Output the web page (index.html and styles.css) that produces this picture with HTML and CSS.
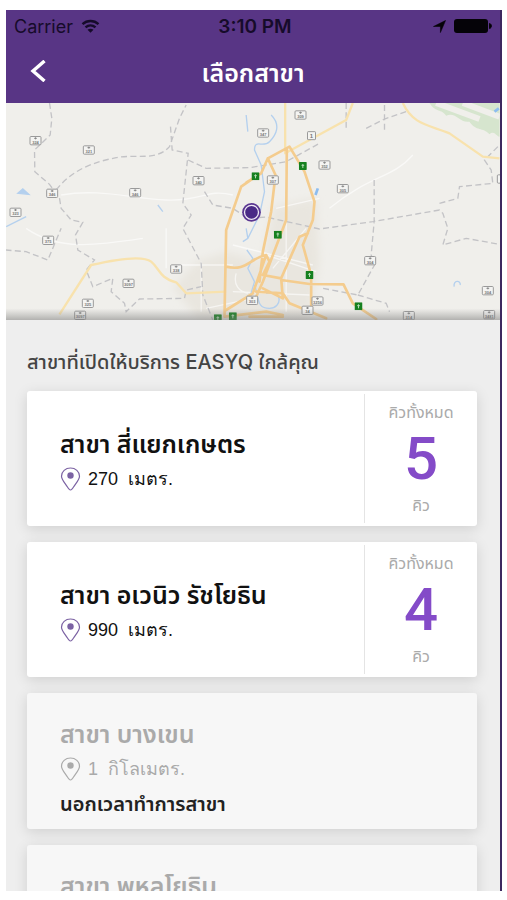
FILE: index.html
```html
<!DOCTYPE html>
<html lang="th">
<head>
<meta charset="utf-8">
<meta name="viewport" content="width=device-width, initial-scale=1">
<title>เลือกสาขา</title>
<link rel="stylesheet" href="styles.css">
</head>
<body>
<svg class="defs" aria-hidden="true">
  <symbol id="pin" viewBox="0 0 20 24">
    <path d="M10 23C9 23 7.800 21.500 6.500 19.300C4.500 16.200 1 12.500 1 9.200C1 4.500 5 1 10 1s9 3.500 9 8.200c0 3.300-3.500 7-5.500 10.100C12.200 21.500 11 23 10 23z" fill="none" stroke="currentColor" stroke-width="1.200"/>
    <circle cx="10" cy="8.500" r="3.200" fill="currentColor"/>
  </symbol>
  <symbol id="shield" viewBox="0 0 36 28" overflow="visible">
    <rect x="1.500" y="1.500" width="33" height="25" rx="3" fill="#f4f4f2" stroke="#9a9a9a" stroke-width="3"/>
    <path d="M14 7h8M18 4v6" stroke="#888" stroke-width="3"/>
  </symbol>
  <symbol id="motorway" viewBox="0 0 24 24">
    <rect width="24" height="24" rx="2" fill="#16801f"/>
    <path d="M12 6v12M8 10h8" stroke="#b5dbb5" stroke-width="3"/>
  </symbol>
</svg>
<div class="app">
  <header class="top">
    <div class="status">
      <div class="carrier"><span>Carrier</span>
        <svg class="wifi" viewBox="0 0 18 14" aria-hidden="true"><g fill="none" stroke="currentColor" stroke-width="2.400"><path d="M1 5.200c4.600-4.200 11.400-4.200 16 0"/><path d="M4 8.300c3-2.600 7-2.600 10 0"/></g><path d="M6 10.800c1.800-1.500 4.200-1.500 6 0L9 13.800z" fill="currentColor"/></svg>
      </div>
      <div class="time">3:10 PM</div>
      <div class="power">
        <svg class="arrow" viewBox="0 0 14 14" aria-hidden="true"><path d="M13.500.5L8 13.500V7H.5z" fill="currentColor" stroke="currentColor" stroke-width=".6"/></svg>
        <svg class="battery" viewBox="0 0 38 14" aria-hidden="true"><rect width="34" height="14" rx="3" fill="currentColor"/><path d="M35.500 4.500c2.500.5 2.500 4.500 0 5z" fill="currentColor" stroke="currentColor"/></svg>
      </div>
    </div>
    <div class="nav">
      <button class="back" aria-label="กลับ"><svg viewBox="0 0 16 22" aria-hidden="true"><path d="M14.500 1L3 11l11.500 10" fill="none" stroke="currentColor" stroke-width="3.400"/></svg></button>
      <h1>เลือกสาขา</h1>
    </div>
  </header>

  <div class="map">
    <svg viewBox="18 24 1485 651" preserveAspectRatio="xMidYMid slice" role="img" aria-label="แผนที่สาขา">
      <defs>
        <linearGradient id="fade" x1="0" y1="0" x2="0" y2="1"><stop offset="0" stop-color="#888" stop-opacity="0"/><stop offset="1" stop-color="#777" stop-opacity=".6"/></linearGradient>
        <filter id="soften"><feGaussianBlur stdDeviation="12"/></filter>
      </defs>
      <rect x="0" y="0" width="1530" height="700" fill="#f0efeb"/>
      <path d="M820 335L950 310L960 500L930 675H600L520 580L590 500L680 470L790 500z" fill="#e9e6df" filter="url(#soften)"/>
      <path d="M1290 24C1310 55 1325 40 1340 62C1370 50 1380 85 1410 80C1430 110 1450 95 1470 118C1485 105 1490 125 1500 125V24z" fill="#d6e5ce"/>
      <path d="M1310 24L1440 72M1390 24L1500 65" stroke="#f0efeb" stroke-width="18"/>
      <g fill="none" stroke="#fff" stroke-width="4" opacity=".6">
        <path d="M185 300C300 280 390 310 500 315S620 280 700 300M80 400C180 470 300 450 430 430M500 400V520M530 510H700M605 500V650M700 450L940 510M830 340L960 310M800 480L950 530M700 590L930 600M820 520L920 400M860 230V650M990 340C1110 240 1180 250 1240 180M620 640L760 610M710 535C700 570 720 590 745 595"/>
      </g>
      <g fill="none" stroke="#c3c3c6" stroke-width="4" stroke-dasharray="18 10">
        <path d="M150 24L157 70L152 120L105 165L106 230L150 268L180 310L185 340L215 375L250 382L228 420L235 465L285 495L260 525L280 575L340 550L335 590L375 625L380 650L420 612L555 610L560 585L605 575M170 285C220 220 290 200 350 188S470 200 510 155L540 70L560 30M513 95L518 165L566 175L550 325L575 360L550 400L605 505L610 600L640 675M566 195L620 220L750 218L860 200L960 145M615 290L640 330L700 340L745 370L800 366L960 402L1120 380L1320 345L1330 355L1345 400L1330 450L1400 430L1500 448M18 465L80 470L145 495L185 400M1124 255V380L1115 480L1125 510L1075 600L970 580M1075 600L1160 625L1170 650M1320 325L1375 310L1380 275L1480 265L1475 225L1455 195L1500 150M1040 24V105M1100 100L1155 72L1220 50M1155 30V105"/>
      </g>
      <g fill="none" stroke="#b4d0ee" stroke-width="4">
        <path d="M740 60L745 110M815 60C845 90 830 120 810 140S765 130 765 165L785 210M740 400L745 430L730 440M742 465L760 490L745 520L765 560L750 610M785 210L795 290L780 360L745 430M800 595C850 580 850 640 810 640S780 610 765 570M20 395L80 365M475 330L490 350"/>
        <path d="M55 295L70 282L88 298z" fill="#b4d0ee"/>
        <path d="M948 300L955 280M1485 50L1498 40" stroke="#8dbdf0" stroke-width="8"/>
        <path d="M1364 575C1360 555 1385 555 1382 570"/>
      </g>
      <g fill="none" stroke="#f8e2ad" stroke-width="7" stroke-linejoin="round">
        <path d="M180 658L275 510C340 495 430 480 455 500C480 520 480 550 530 562L560 595L680 590M857 24V175L1040 75L1060 24M1210 24C1240 90 1290 90 1350 115L1450 185L1500 190"/>
      </g>
      <g fill="none" stroke="#f4cc8e" stroke-width="8" stroke-linejoin="round" stroke-linecap="round">
        <path d="M768 245L725 275L680 405L675 665M741 262L785 235L805 190L870 155L915 230L945 320L940 375L910 450L935 540V645M862 160L860 375L790 560L770 605M805 190L828 240L815 350L790 470L780 560M680 515C740 530 750 490 800 480L810 500L790 540L845 550L850 610L790 580M845 550L900 425L925 415M845 555L930 567L1032 568L1060 625L1130 672M680 645L760 595L800 480M675 665L800 650L850 660M770 590L850 595L870 625L980 670M750 665H850"/>
      </g>
      <g fill="#777" font-size="12" text-anchor="middle" font-family="Liberation Sans, sans-serif" font-weight="bold">
        <g><use href="#shield" x="90" y="123" width="36" height="28"/><text x="108" y="146">324</text></g>
        <g><use href="#shield" x="250" y="151" width="36" height="28"/><text x="268" y="174">321</text></g>
        <g><use href="#shield" x="140" y="281" width="36" height="28"/><text x="158" y="304">346</text></g>
        <g><use href="#shield" x="389" y="279" width="36" height="28"/><text x="407" y="302">346</text></g>
        <g><use href="#shield" x="579" y="243" width="36" height="28"/><text x="597" y="266">340</text></g>
        <g><use href="#shield" x="30" y="338" width="36" height="28"/><text x="48" y="361">323</text></g>
        <g><use href="#shield" x="128" y="422" width="36" height="28"/><text x="146" y="445">375</text></g>
        <g><use href="#shield" x="512" y="508" width="36" height="28"/><text x="530" y="531">338</text></g>
        <g><use href="#shield" x="369" y="551" width="36" height="28"/><text x="387" y="574">3097</text></g>
        <g><use href="#shield" x="247" y="611" width="36" height="28"/><text x="265" y="634">325</text></g>
        <g><use href="#shield" x="224" y="647" width="36" height="28"/><text x="242" y="670">3097</text></g>
        <g><use href="#shield" x="740" y="602" width="36" height="28"/><text x="758" y="625">303</text></g>
        <g><use href="#shield" x="773" y="100" width="36" height="28"/><text x="791" y="123">347</text></g>
        <g><use href="#shield" x="885" y="46" width="36" height="28"/><text x="903" y="69">309</text></g>
        <g><use href="#shield" x="802" y="241" width="36" height="28"/><text x="820" y="264">307</text></g>
        <g><use href="#shield" x="957" y="196" width="36" height="28"/><text x="975" y="219">352</text></g>
        <g><use href="#shield" x="1012" y="267" width="36" height="28"/><text x="1030" y="290">305</text></g>
        <g><use href="#shield" x="1094" y="483" width="36" height="28"/><text x="1112" y="506">304</text></g>
        <g><use href="#shield" x="936" y="604" width="36" height="28"/><text x="954" y="627">3256</text></g>
        <g><use href="#shield" x="906" y="632" width="36" height="28"/><text x="924" y="655">34</text></g>
        <g><use href="#shield" x="1210" y="648" width="36" height="28"/><text x="1228" y="671">314</text></g>
        <g><use href="#shield" x="1447" y="573" width="36" height="28"/><text x="1465" y="596">304</text></g>
        <g><use href="#shield" x="1451" y="645" width="36" height="28"/><text x="1469" y="668">3481</text></g>
        <g><use href="#shield" x="1492" y="238" width="36" height="28"/></g>
        <rect x="924" y="110" width="24" height="24" rx="2" fill="#f4f4f2" stroke="#999" stroke-width="3"/><text x="936" y="129" font-size="18">1</text>
      </g>
      <use href="#motorway" x="756" y="232" width="24" height="24"/>
      <use href="#motorway" x="898" y="201" width="24" height="24"/>
      <use href="#motorway" x="823" y="407" width="24" height="24"/>
      <use href="#motorway" x="918" y="528" width="24" height="24"/>
      <use href="#motorway" x="1065" y="622" width="24" height="24"/>
      <use href="#motorway" x="688" y="652" width="24" height="24"/>
      <use href="#motorway" x="643" y="658" width="24" height="24"/>
      <circle cx="756" cy="352" r="28" fill="#5a3591"/><circle cx="756" cy="352" r="21" fill="#4a2a86" stroke="#eee8f4" stroke-width="4"/>
      <rect x="0" y="640" width="1530" height="40" fill="url(#fade)"/>
    </svg>
  </div>

  <main>
    <h2>สาขาที่เปิดให้บริการ EASYQ ใกล้คุณ</h2>
    <ul class="branches">
      <li class="card">
        <div class="info"><h3>สาขา สี่แยกเกษตร</h3><p class="distance"><svg aria-hidden="true"><use href="#pin"/></svg><span>270&nbsp; เมตร.</span></p></div>
        <div class="queue"><span>คิวทั้งหมด</span><strong>5</strong><span>คิว</span></div>
      </li>
      <li class="card">
        <div class="info"><h3>สาขา อเวนิว รัชโยธิน</h3><p class="distance"><svg aria-hidden="true"><use href="#pin"/></svg><span>990&nbsp; เมตร.</span></p></div>
        <div class="queue"><span>คิวทั้งหมด</span><strong>4</strong><span>คิว</span></div>
      </li>
      <li class="card closed">
        <div class="info"><h3>สาขา บางเขน</h3><p class="distance"><svg aria-hidden="true"><use href="#pin"/></svg><span>1&nbsp; กิโลเมตร.</span></p><p class="notice">นอกเวลาทำการสาขา</p></div>
      </li>
      <li class="card closed">
        <div class="info"><h3>สาขา พหลโยธิน</h3></div>
      </li>
    </ul>
  </main>
</div>
</body>
</html>
```
FILE: styles.css
```css
* { box-sizing: border-box; }
body {
  margin: 0;
  padding: 10px 5px 9px 6px;
  height: 100vh;
  background: #fff;
  color: #111;
  font-family: Inter, "Noto Sans Thai", "Liberation Sans", sans-serif;
}
h1, h2, h3, p, ul { margin: 0; padding: 0; }
.defs { position: absolute; width: 0; height: 0; }
.app {
  display: flex;
  flex-direction: column;
  height: 100%;
  overflow: hidden;
  background: #eee;
  border-right: 2px solid #3c2860;
}
.top { flex: none; background: #583585; }
.status {
  display: grid;
  grid-template-columns: 1fr auto 1fr;
  align-items: center;
  height: 32px;
  padding: 0 8px;
  color: #160b2a;
  font-size: 18px;
}
.carrier, .power { display: flex; align-items: center; gap: 8px; }
.power { justify-content: flex-end; color: #050308; }
.time { padding-left: 4px; font-size: 19px; font-weight: 600; }
.wifi { width: 19px; height: 14px; }
.arrow { width: 13px; height: 13px; }
.battery { width: 38px; height: 14px; }
.nav {
  display: grid;
  grid-template-columns: 64px 1fr 64px;
  align-items: center;
  height: 61px;
  color: #fff;
}
.back { width: 64px; height: 48px; padding: 0; border: 0; background: none; color: inherit; }
.back svg { width: 16px; height: 22px; }
h1 { text-align: center; font-size: 25px; line-height: 36px; font-weight: 600; }
.map { flex: none; }
.map svg { display: block; width: 100%; height: 217px; }
main { padding: 24px 23px 0 21px; }
h2 { height: 47px; font-size: 20px; line-height: 36px; font-weight: 500; color: #444; white-space: nowrap; }
.branches { display: grid; gap: 16px; list-style: none; }
.card {
  display: flex;
  align-items: center;
  min-height: 135px;
  padding: 3px 0;
  background: #fff;
  border-radius: 3px;
  box-shadow: 0 3px 14px rgba(0, 0, 0, 0.13);
}
.info { flex: 1; padding: 4px 0 0 33px; }
h3 { font-size: 25px; line-height: 36px; font-weight: 600; white-space: nowrap; }
.distance { display: flex; align-items: center; gap: 7px; font-family: "Liberation Sans", sans-serif; font-size: 18px; line-height: 34px; }
.distance svg { width: 21px; height: 24px; color: #7b62a3; }
.queue {
  display: flex;
  flex-direction: column;
  align-items: center;
  justify-content: space-between;
  align-self: stretch;
  width: 113px;
  padding: 6px 0;
  border-left: 1px solid #e4e4e4;
  color: #aaa;
  font-size: 16px;
  line-height: 24px;
}
.queue strong { color: #844bc8; font-family: Roboto, sans-serif; font-size: 60px; line-height: 64px; font-weight: 500; }
.closed { align-items: flex-start; min-height: 136px; padding-top: 19px; background: #f7f7f7; color: #aaa; }
.closed .distance svg { color: #aaa; }
.notice { color: #222; font-size: 20px; line-height: 36px; font-weight: 600; }
```
